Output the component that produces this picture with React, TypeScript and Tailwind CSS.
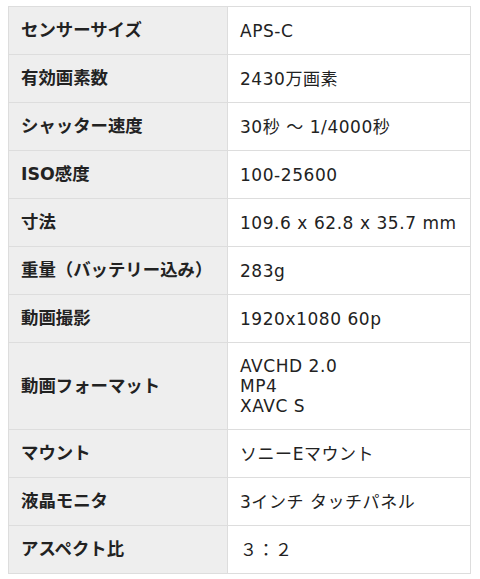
const specs: { label: string; value: string[] }[] = [
  { label: "センサーサイズ", value: ["APS-C"] },
  { label: "有効画素数", value: ["2430万画素"] },
  { label: "シャッター速度", value: ["30秒 〜 1/4000秒"] },
  { label: "ISO感度", value: ["100-25600"] },
  { label: "寸法", value: ["109.6 x 62.8 x 35.7 mm"] },
  { label: "重量（バッテリー込み）", value: ["283g"] },
  { label: "動画撮影", value: ["1920x1080 60p"] },
  { label: "動画フォーマット", value: ["AVCHD 2.0", "MP4", "XAVC S"] },
  { label: "マウント", value: ["ソニーEマウント"] },
  { label: "液晶モニタ", value: ["3インチ タッチパネル"] },
  { label: "アスペクト比", value: ["３：２"] },
];

export default function App() {
  return (
    <div className="min-h-[579px] w-[480px] bg-white pl-[8px] pt-[6px] text-[#333]">
      <table className="w-[463px] table-fixed border-collapse">
        <tbody>
          {specs.map((row) => (
            <SpecRow key={row.label} label={row.label} value={row.value} />
          ))}
        </tbody>
      </table>
    </div>
  );
}

function SpecRow({ label, value }: { label: string; value: string[] }) {
  return (
    <tr>
      <th className="w-[219px] border border-[#dddddd] bg-[#eeeeee] py-[13px] pl-[12px] pr-2 text-left align-middle font-['DejaVu_Sans','Noto_Sans_CJK_JP',sans-serif] text-[17.4px] leading-[21px] font-bold text-[#222]">
        {label}
      </th>
      <td className="border border-[#dddddd] py-[13px] pl-[12px] pr-2 align-middle font-['DejaVu_Sans','Noto_Sans_CJK_JP',sans-serif] text-[17px] leading-[20px] tracking-[0.55px] text-[#222]">
        {value.map((line) => (
          <div key={line}>{line}</div>
        ))}
      </td>
    </tr>
  );
}
